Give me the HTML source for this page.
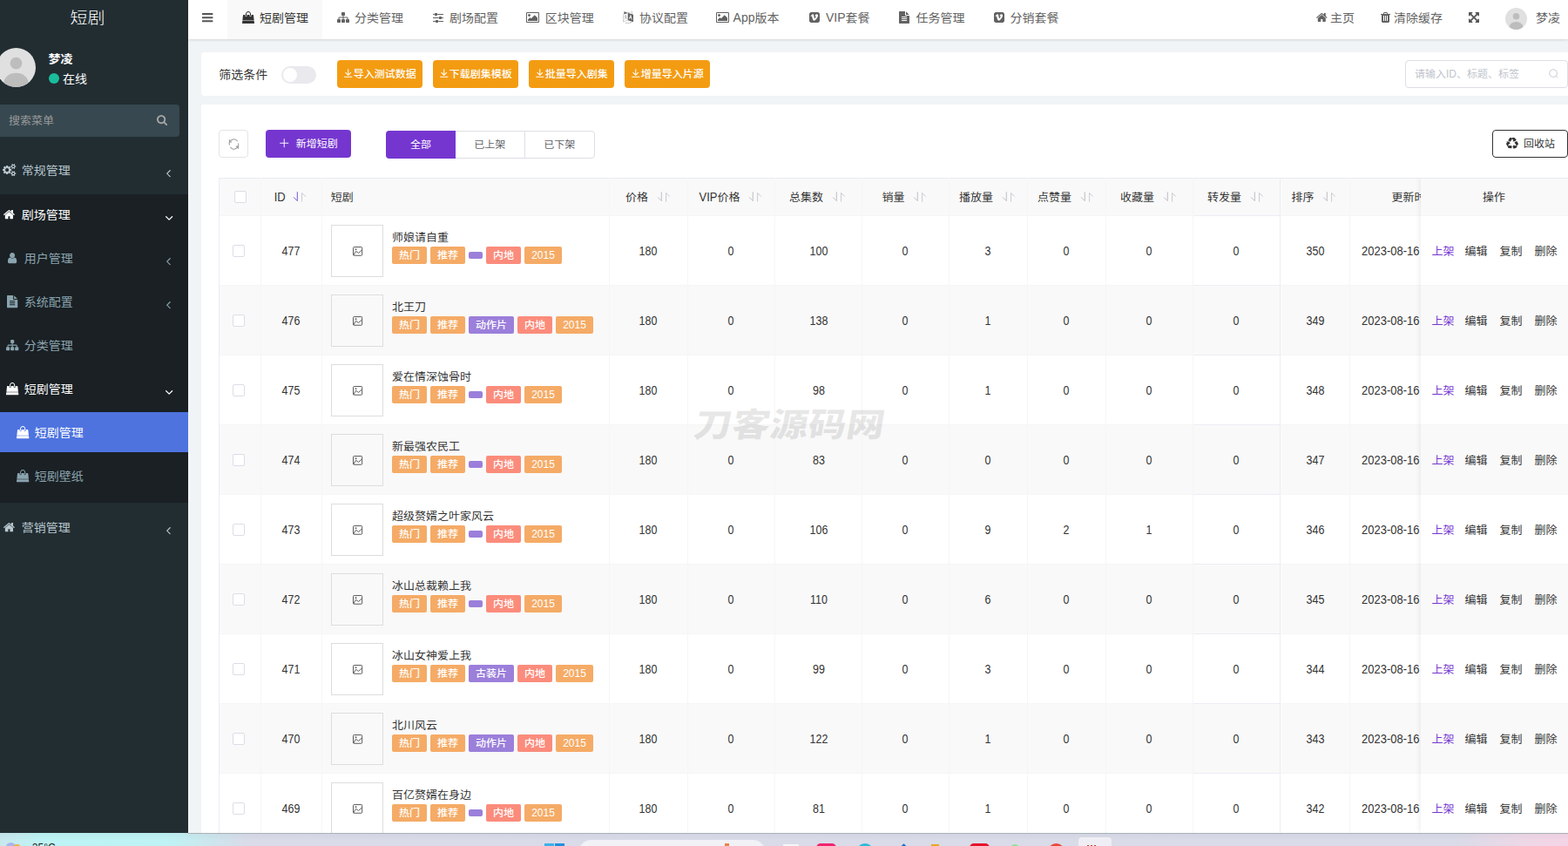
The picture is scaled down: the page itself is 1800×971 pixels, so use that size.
<!DOCTYPE html>
<html lang="zh-CN">
<head>
<meta charset="utf-8">
<title>短剧</title>
<style>
*{box-sizing:border-box;margin:0;padding:0}
html,body{width:1800px;height:971px;overflow:hidden;background:#f1f4f6}
body{position:relative;font-family:"Liberation Sans","Noto Sans CJK SC",sans-serif;font-size:14px;color:#333}
.t{position:absolute;white-space:nowrap;display:block;transform:scaleY(0.925);transform-origin:0 50%}
.l{display:inline-block}
.tag{transform:none}
.tag b{display:block;font-weight:500;transform:scaleY(0.925)}
.ic{position:absolute;display:block;overflow:visible}
.abs{position:absolute}
ul{list-style:none}
a{text-decoration:none;color:inherit}
#sidebar{position:absolute;left:0;top:0;width:216px;height:956px;background:#222d32;overflow:hidden}
#sidebar .dark{position:absolute;left:0;top:223px;width:216px;height:354px;background:#1a2024}
#sidebar .act{position:absolute;left:0;top:473px;width:216px;height:46px;background:#4e73df}
#sidebar .search{position:absolute;left:0;top:120px;width:206px;height:37px;background:#374850;border-radius:0 4px 4px 0}
#topnav{position:absolute;left:216px;top:0;width:1584px;height:45px;background:#fff;box-shadow:0 1px 3px rgba(0,0,0,.13)}
#topnav .cur{position:absolute;left:45px;top:0;width:109px;height:45px;background:#f9f9f9}
.card{position:absolute;background:#fff}
.btn-o{position:absolute;top:69px;height:32px;width:98px;border-radius:4px;background:#f39c12}
.btn-p{position:absolute;border-radius:4px;background:#7536d0}
#tbl{position:absolute;left:251px;top:204px;width:1549px;height:752px;overflow:hidden}
#tbl .hd{position:absolute;left:0;top:0;width:1549px;height:44px;background:#f9f9f9;border-top:1px solid #e8eaf6;border-bottom:1px solid #f6f6f6}
#tbl .row{position:absolute;left:0;width:1549px;height:80px;background:#fff;border-bottom:1px solid #f6f6f6}
#tbl .row.alt{background:#f9f9f9}
#tbl .vl{position:absolute;top:0;width:1px;height:752px;background:#f6f6f7}
#tbl .fix{position:absolute;top:0;width:170px;height:752px;box-shadow:-1px 0 6px rgba(0,0,0,.075)}
.cb{position:absolute;width:14px;height:14px;border:1px solid #dcdde8;border-radius:2px;background:#fff}
.img{position:absolute;left:129px;width:60px;height:60px;border:1px solid #dddddd}
.tag{position:absolute;height:20px;border-radius:2px;color:#fff;font-size:12px;line-height:20px;text-align:center;white-space:nowrap}
.tag.o{background:#f5ab66}.tag.p{background:#9b7fda}.tag.c{background:#fb8c7c}
.tag.e{height:8px;border-radius:2px}
.num{position:absolute;text-align:center;font-size:13px;line-height:20px;color:#333;white-space:nowrap;transform:scale(0.96,1.09)}
#taskbar{position:absolute;left:0;top:956px;width:1800px;height:15px;overflow:hidden;background:linear-gradient(90deg,#c8e8ee 0,#bdf4f5 50px,#bff2f4 195px,#d9dbe8 285px,#dadbe8 1670px,#efd7e6 1755px,#f4d4e6 1800px)}
</style>
</head>
<body>
<aside id="sidebar">
<div class="dark"></div><div class="act"></div>
<a class="t " style="left:80.60px;top:5.50px;font-size:20px;line-height:30px;color:#fff;font-weight:300;">短剧</a><svg class="ic" style="left:-4.3px;top:54.5px;width:45px;height:45px" viewBox="0 0 46 46"><defs><clipPath id="av1"><circle cx="23" cy="23" r="23"/></clipPath></defs><circle cx="23" cy="23" r="23" fill="#e0e0e0"/><g clip-path="url(#av1)" fill="#bdbdbd"><circle cx="23" cy="18" r="7"/><ellipse cx="23" cy="41" rx="14.5" ry="11.5"/></g></svg><p class="t " style="left:55.60px;top:56.50px;font-size:14px;line-height:20px;color:#fff;font-weight:bold;">梦凌</p><span class="abs" style="left:56px;top:84px;width:12px;height:12px;border-radius:50%;background:#1abc9c"></span><a class="t " style="left:72.00px;top:79.60px;font-size:14px;line-height:20px;color:#fff;">在线</a><div class="search"><span class="t " style="left:10.00px;top:8.90px;font-size:13px;line-height:20px;color:#9a9a9a;">搜索菜单</span><svg class="ic" style="left:179.60px;top:12.00px;width:12.07px;height:12.07px;" viewBox="0.0 -1408.0 1664.0 1664.0" aria-hidden="true"><path fill="#a8a8a8" transform="scale(1,-1)" d="M1152 704q0 185 -131.5 316.5t-316.5 131.5t-316.5 -131.5t-131.5 -316.5t131.5 -316.5t316.5 -131.5t316.5 131.5t131.5 316.5zM1664 -128q0 -52 -38 -90t-90 -38q-54 0 -90 38l-343 342q-179 -124 -399 -124q-143 0 -273.5 55.5t-225 150t-150 225t-55.5 273.5
t55.5 273.5t150 225t225 150t273.5 55.5t273.5 -55.5t225 -150t150 -225t55.5 -273.5q0 -220 -124 -399l343 -343q37 -37 37 -90z"/></svg></div>
<ul>
<li><svg class="ic" style="left:3.14px;top:187.97px;width:15.32px;height:14.05px;" viewBox="0.0 -1520.0 1920.0 1761.0" aria-hidden="true"><path fill="#b8c7ce" transform="scale(1,-1)" d="M896 640q0 106 -75 181t-181 75t-181 -75t-75 -181t75 -181t181 -75t181 75t75 181zM1664 128q0 52 -38 90t-90 38t-90 -38t-38 -90q0 -53 37.5 -90.5t90.5 -37.5t90.5 37.5t37.5 90.5zM1664 1152q0 52 -38 90t-90 38t-90 -38t-38 -90q0 -53 37.5 -90.5t90.5 -37.5
t90.5 37.5t37.5 90.5zM1280 731v-185q0 -10 -7 -19.5t-16 -10.5l-155 -24q-11 -35 -32 -76q34 -48 90 -115q7 -11 7 -20q0 -12 -7 -19q-23 -30 -82.5 -89.5t-78.5 -59.5q-11 0 -21 7l-115 90q-37 -19 -77 -31q-11 -108 -23 -155q-7 -24 -30 -24h-186q-11 0 -20 7.5t-10 17.5
l-23 153q-34 10 -75 31l-118 -89q-7 -7 -20 -7q-11 0 -21 8q-144 133 -144 160q0 9 7 19q10 14 41 53t47 61q-23 44 -35 82l-152 24q-10 1 -17 9.5t-7 19.5v185q0 10 7 19.5t16 10.5l155 24q11 35 32 76q-34 48 -90 115q-7 11 -7 20q0 12 7 20q22 30 82 89t79 59q11 0 21 -7
l115 -90q34 18 77 32q11 108 23 154q7 24 30 24h186q11 0 20 -7.5t10 -17.5l23 -153q34 -10 75 -31l118 89q8 7 20 7q11 0 21 -8q144 -133 144 -160q0 -8 -7 -19q-12 -16 -42 -54t-45 -60q23 -48 34 -82l152 -23q10 -2 17 -10.5t7 -19.5zM1920 198v-140q0 -16 -149 -31
q-12 -27 -30 -52q51 -113 51 -138q0 -4 -4 -7q-122 -71 -124 -71q-8 0 -46 47t-52 68q-20 -2 -30 -2t-30 2q-14 -21 -52 -68t-46 -47q-2 0 -124 71q-4 3 -4 7q0 25 51 138q-18 25 -30 52q-149 15 -149 31v140q0 16 149 31q13 29 30 52q-51 113 -51 138q0 4 4 7q4 2 35 20
t59 34t30 16q8 0 46 -46.5t52 -67.5q20 2 30 2t30 -2q51 71 92 112l6 2q4 0 124 -70q4 -3 4 -7q0 -25 -51 -138q17 -23 30 -52q149 -15 149 -31zM1920 1222v-140q0 -16 -149 -31q-12 -27 -30 -52q51 -113 51 -138q0 -4 -4 -7q-122 -71 -124 -71q-8 0 -46 47t-52 68
q-20 -2 -30 -2t-30 2q-14 -21 -52 -68t-46 -47q-2 0 -124 71q-4 3 -4 7q0 25 51 138q-18 25 -30 52q-149 15 -149 31v140q0 16 149 31q13 29 30 52q-51 113 -51 138q0 4 4 7q4 2 35 20t59 34t30 16q8 0 46 -46.5t52 -67.5q20 2 30 2t30 -2q51 71 92 112l6 2q4 0 124 -70
q4 -3 4 -7q0 -25 -51 -138q17 -23 30 -52q149 -15 149 -31z"/></svg><a class="t " style="left:24.80px;top:184.50px;font-size:14px;line-height:20px;color:#b8c7ce;">常规管理</a><svg class="ic" style="left:191.36px;top:194.82px;width:4.87px;height:8.35px;" viewBox="45.0 -1075.0 582.0 998.0" aria-hidden="true"><path fill="#b8c7ce" transform="scale(1,-1)" d="M627 992q0 -13 -10 -23l-393 -393l393 -393q10 -10 10 -23t-10 -23l-50 -50q-10 -10 -23 -10t-23 10l-466 466q-10 10 -10 23t10 23l466 466q10 10 23 10t23 -10l50 -50q10 -10 10 -23z"/></svg></li>
<li><svg class="ic" style="left:4.37px;top:240.88px;width:12.87px;height:10.24px;" viewBox="25.9 -1283.0 1612.2 1283.0" aria-hidden="true"><path fill="#fff" transform="scale(1,-1)" d="M1408 544v-480q0 -26 -19 -45t-45 -19h-384v384h-256v-384h-384q-26 0 -45 19t-19 45v480q0 1 0.5 3t0.5 3l575 474l575 -474q1 -2 1 -6zM1631 613l-62 -74q-8 -9 -21 -11h-3q-13 0 -21 7l-692 577l-692 -577q-12 -8 -24 -7q-13 2 -21 11l-62 74q-8 10 -7 23.5t11 21.5
l719 599q32 26 76 26t76 -26l244 -204v195q0 14 9 23t23 9h192q14 0 23 -9t9 -23v-408l219 -182q10 -8 11 -21.5t-7 -23.5z"/></svg><a class="t " style="left:24.80px;top:235.50px;font-size:14px;line-height:20px;color:#fff;">剧场管理</a><svg class="ic" style="left:190.32px;top:247.56px;width:8.35px;height:4.87px;" viewBox="77.0 -883.0 998.0 582.0" aria-hidden="true"><path fill="#fff" transform="scale(1,-1)" d="M1075 800q0 -13 -10 -23l-466 -466q-10 -10 -23 -10t-23 10l-466 466q-10 10 -10 23t10 23l50 50q10 10 23 10t23 -10l393 -393l393 393q10 10 23 10t23 -10l50 -50q10 -10 10 -23z"/></svg></li>
<li><svg class="ic" style="left:8.79px;top:289.87px;width:10.21px;height:12.26px;" viewBox="0.0 -1408.0 1280.0 1536.0" aria-hidden="true"><path fill="#8aa4af" transform="scale(1,-1)" d="M1280 137q0 -109 -62.5 -187t-150.5 -78h-854q-88 0 -150.5 78t-62.5 187q0 85 8.5 160.5t31.5 152t58.5 131t94 89t134.5 34.5q131 -128 313 -128t313 128q76 0 134.5 -34.5t94 -89t58.5 -131t31.5 -152t8.5 -160.5zM1024 1024q0 -159 -112.5 -271.5t-271.5 -112.5
t-271.5 112.5t-112.5 271.5t112.5 271.5t271.5 112.5t271.5 -112.5t112.5 -271.5z"/></svg><a class="t " style="left:27.70px;top:285.50px;font-size:14px;line-height:20px;color:#8aa4af;">用户管理</a><svg class="ic" style="left:191.36px;top:295.82px;width:4.87px;height:8.35px;" viewBox="45.0 -1075.0 582.0 998.0" aria-hidden="true"><path fill="#8aa4af" transform="scale(1,-1)" d="M627 992q0 -13 -10 -23l-393 -393l393 -393q10 -10 10 -23t-10 -23l-50 -50q-10 -10 -23 -10t-23 10l-466 466q-10 10 -10 23t10 23l466 466q10 10 23 10t23 -10l50 -50q10 -10 10 -23z"/></svg></li>
<li><svg class="ic" style="left:7.77px;top:338.85px;width:12.26px;height:14.30px;" viewBox="0.0 -1536.0 1536.0 1792.0" aria-hidden="true"><path fill="#8aa4af" transform="scale(1,-1)" d="M1468 1060q14 -14 28 -36h-472v472q22 -14 36 -28zM992 896h544v-1056q0 -40 -28 -68t-68 -28h-1344q-40 0 -68 28t-28 68v1600q0 40 28 68t68 28h800v-544q0 -40 28 -68t68 -28zM1152 160v64q0 14 -9 23t-23 9h-704q-14 0 -23 -9t-9 -23v-64q0 -14 9 -23t23 -9h704
q14 0 23 9t9 23zM1152 416v64q0 14 -9 23t-23 9h-704q-14 0 -23 -9t-9 -23v-64q0 -14 9 -23t23 -9h704q14 0 23 9t9 23zM1152 672v64q0 14 -9 23t-23 9h-704q-14 0 -23 -9t-9 -23v-64q0 -14 9 -23t23 -9h704q14 0 23 9t9 23z"/></svg><a class="t " style="left:27.70px;top:335.50px;font-size:14px;line-height:20px;color:#8aa4af;">系统配置</a><svg class="ic" style="left:191.36px;top:345.82px;width:4.87px;height:8.35px;" viewBox="45.0 -1075.0 582.0 998.0" aria-hidden="true"><path fill="#8aa4af" transform="scale(1,-1)" d="M627 992q0 -13 -10 -23l-393 -393l393 -393q10 -10 10 -23t-10 -23l-50 -50q-10 -10 -23 -10t-23 10l-466 466q-10 10 -10 23t10 23l466 466q10 10 23 10t23 -10l50 -50q10 -10 10 -23z"/></svg></li>
<li><svg class="ic" style="left:6.75px;top:389.87px;width:14.30px;height:12.26px;" viewBox="0.0 -1408.0 1792.0 1536.0" aria-hidden="true"><path fill="#8aa4af" transform="scale(1,-1)" d="M1792 288v-320q0 -40 -28 -68t-68 -28h-320q-40 0 -68 28t-28 68v320q0 40 28 68t68 28h96v192h-512v-192h96q40 0 68 -28t28 -68v-320q0 -40 -28 -68t-68 -28h-320q-40 0 -68 28t-28 68v320q0 40 28 68t68 28h96v192h-512v-192h96q40 0 68 -28t28 -68v-320
q0 -40 -28 -68t-68 -28h-320q-40 0 -68 28t-28 68v320q0 40 28 68t68 28h96v192q0 52 38 90t90 38h512v192h-96q-40 0 -68 28t-28 68v320q0 40 28 68t68 28h320q40 0 68 -28t28 -68v-320q0 -40 -28 -68t-68 -28h-96v-192h512q52 0 90 -38t38 -90v-192h96q40 0 68 -28t28 -68
z"/></svg><a class="t " style="left:27.70px;top:385.50px;font-size:14px;line-height:20px;color:#8aa4af;">分类管理</a></li>
<li><svg class="ic" style="left:6.75px;top:438.85px;width:14.31px;height:14.30px;" viewBox="-0.4 -1536.0 1792.8 1792.0" aria-hidden="true"><path fill="#fff" transform="scale(1,-1)" d="M1757 128l35 -313q3 -28 -16 -50q-19 -21 -48 -21h-1664q-29 0 -48 21q-19 22 -16 50l35 313h1722zM1664 967l86 -775h-1708l86 775q3 24 21 40.5t43 16.5h256v-128q0 -53 37.5 -90.5t90.5 -37.5t90.5 37.5t37.5 90.5v128h384v-128q0 -53 37.5 -90.5t90.5 -37.5
t90.5 37.5t37.5 90.5v128h256q25 0 43 -16.5t21 -40.5zM1280 1152v-256q0 -26 -19 -45t-45 -19t-45 19t-19 45v256q0 106 -75 181t-181 75t-181 -75t-75 -181v-256q0 -26 -19 -45t-45 -19t-45 19t-19 45v256q0 159 112.5 271.5t271.5 112.5t271.5 -112.5t112.5 -271.5z"/></svg><a class="t " style="left:27.70px;top:435.50px;font-size:14px;line-height:20px;color:#fff;">短剧管理</a><svg class="ic" style="left:190.32px;top:447.56px;width:8.35px;height:4.87px;" viewBox="77.0 -883.0 998.0 582.0" aria-hidden="true"><path fill="#fff" transform="scale(1,-1)" d="M1075 800q0 -13 -10 -23l-466 -466q-10 -10 -23 -10t-23 10l-466 466q-10 10 -10 23t10 23l50 50q10 10 23 10t23 -10l393 -393l393 393q10 10 23 10t23 -10l50 -50q10 -10 10 -23z"/></svg></li>
<li><svg class="ic" style="left:18.85px;top:488.85px;width:14.31px;height:14.30px;" viewBox="-0.4 -1536.0 1792.8 1792.0" aria-hidden="true"><path fill="#fff" transform="scale(1,-1)" d="M1757 128l35 -313q3 -28 -16 -50q-19 -21 -48 -21h-1664q-29 0 -48 21q-19 22 -16 50l35 313h1722zM1664 967l86 -775h-1708l86 775q3 24 21 40.5t43 16.5h256v-128q0 -53 37.5 -90.5t90.5 -37.5t90.5 37.5t37.5 90.5v128h384v-128q0 -53 37.5 -90.5t90.5 -37.5
t90.5 37.5t37.5 90.5v128h256q25 0 43 -16.5t21 -40.5zM1280 1152v-256q0 -26 -19 -45t-45 -19t-45 19t-19 45v256q0 106 -75 181t-181 75t-181 -75t-75 -181v-256q0 -26 -19 -45t-45 -19t-45 19t-19 45v256q0 159 112.5 271.5t271.5 112.5t271.5 -112.5t112.5 -271.5z"/></svg><a class="t " style="left:39.70px;top:485.50px;font-size:14px;line-height:20px;color:#fff;">短剧管理</a></li>
<li><svg class="ic" style="left:18.85px;top:538.85px;width:14.31px;height:14.30px;" viewBox="-0.4 -1536.0 1792.8 1792.0" aria-hidden="true"><path fill="#8aa4af" transform="scale(1,-1)" d="M1757 128l35 -313q3 -28 -16 -50q-19 -21 -48 -21h-1664q-29 0 -48 21q-19 22 -16 50l35 313h1722zM1664 967l86 -775h-1708l86 775q3 24 21 40.5t43 16.5h256v-128q0 -53 37.5 -90.5t90.5 -37.5t90.5 37.5t37.5 90.5v128h384v-128q0 -53 37.5 -90.5t90.5 -37.5
t90.5 37.5t37.5 90.5v128h256q25 0 43 -16.5t21 -40.5zM1280 1152v-256q0 -26 -19 -45t-45 -19t-45 19t-19 45v256q0 106 -75 181t-181 75t-181 -75t-75 -181v-256q0 -26 -19 -45t-45 -19t-45 19t-19 45v256q0 159 112.5 271.5t271.5 112.5t271.5 -112.5t112.5 -271.5z"/></svg><a class="t " style="left:39.70px;top:535.50px;font-size:14px;line-height:20px;color:#8aa4af;">短剧壁纸</a></li>
<li><svg class="ic" style="left:4.37px;top:599.88px;width:12.87px;height:10.24px;" viewBox="25.9 -1283.0 1612.2 1283.0" aria-hidden="true"><path fill="#b8c7ce" transform="scale(1,-1)" d="M1408 544v-480q0 -26 -19 -45t-45 -19h-384v384h-256v-384h-384q-26 0 -45 19t-19 45v480q0 1 0.5 3t0.5 3l575 474l575 -474q1 -2 1 -6zM1631 613l-62 -74q-8 -9 -21 -11h-3q-13 0 -21 7l-692 577l-692 -577q-12 -8 -24 -7q-13 2 -21 11l-62 74q-8 10 -7 23.5t11 21.5
l719 599q32 26 76 26t76 -26l244 -204v195q0 14 9 23t23 9h192q14 0 23 -9t9 -23v-408l219 -182q10 -8 11 -21.5t-7 -23.5z"/></svg><a class="t " style="left:24.80px;top:594.50px;font-size:14px;line-height:20px;color:#b8c7ce;">营销管理</a><svg class="ic" style="left:191.36px;top:604.82px;width:4.87px;height:8.35px;" viewBox="45.0 -1075.0 582.0 998.0" aria-hidden="true"><path fill="#b8c7ce" transform="scale(1,-1)" d="M627 992q0 -13 -10 -23l-393 -393l393 -393q10 -10 10 -23t-10 -23l-50 -50q-10 -10 -23 -10t-23 10l-466 466q-10 10 -10 23t10 23l466 466q10 10 23 10t23 -10l50 -50q10 -10 10 -23z"/></svg></li>
</ul>
</aside>
<header id="topnav">
<div class="cur"></div>
<svg class="ic" style="left:16.20px;top:15.00px;width:12.43px;height:10.36px;" viewBox="0.0 -1280.0 1536.0 1280.0" aria-hidden="true"><path fill="#555" transform="scale(1,-1)" d="M1536 192v-128q0 -26 -19 -45t-45 -19h-1408q-26 0 -45 19t-19 45v128q0 26 19 45t45 19h1408q26 0 45 -19t19 -45zM1536 704v-128q0 -26 -19 -45t-45 -19h-1408q-26 0 -45 19t-19 45v128q0 26 19 45t45 19h1408q26 0 45 -19t19 -45zM1536 1216v-128q0 -26 -19 -45
t-45 -19h-1408q-26 0 -45 19t-19 45v128q0 26 19 45t45 19h1408q26 0 45 -19t19 -45z"/></svg><nav><a><svg class="ic" style="left:62.00px;top:13.00px;width:14.01px;height:14.00px;" viewBox="-0.4 -1536.0 1792.8 1792.0" aria-hidden="true"><path fill="#333" transform="scale(1,-1)" d="M1757 128l35 -313q3 -28 -16 -50q-19 -21 -48 -21h-1664q-29 0 -48 21q-19 22 -16 50l35 313h1722zM1664 967l86 -775h-1708l86 775q3 24 21 40.5t43 16.5h256v-128q0 -53 37.5 -90.5t90.5 -37.5t90.5 37.5t37.5 90.5v128h384v-128q0 -53 37.5 -90.5t90.5 -37.5
t90.5 37.5t37.5 90.5v128h256q25 0 43 -16.5t21 -40.5zM1280 1152v-256q0 -26 -19 -45t-45 -19t-45 19t-19 45v256q0 106 -75 181t-181 75t-181 -75t-75 -181v-256q0 -26 -19 -45t-45 -19t-45 19t-19 45v256q0 159 112.5 271.5t271.5 112.5t271.5 -112.5t112.5 -271.5z"/></svg><span class="t " style="left:82.00px;top:9.60px;font-size:14px;line-height:20px;color:#333;">短剧管理</span></a><a><svg class="ic" style="left:171.00px;top:14.00px;width:14.00px;height:12.00px;" viewBox="0.0 -1408.0 1792.0 1536.0" aria-hidden="true"><path fill="#626262" transform="scale(1,-1)" d="M1792 288v-320q0 -40 -28 -68t-68 -28h-320q-40 0 -68 28t-28 68v320q0 40 28 68t68 28h96v192h-512v-192h96q40 0 68 -28t28 -68v-320q0 -40 -28 -68t-68 -28h-320q-40 0 -68 28t-28 68v320q0 40 28 68t68 28h96v192h-512v-192h96q40 0 68 -28t28 -68v-320
q0 -40 -28 -68t-68 -28h-320q-40 0 -68 28t-28 68v320q0 40 28 68t68 28h96v192q0 52 38 90t90 38h512v192h-96q-40 0 -68 28t-28 68v320q0 40 28 68t68 28h320q40 0 68 -28t28 -68v-320q0 -40 -28 -68t-68 -28h-96v-192h512q52 0 90 -38t38 -90v-192h96q40 0 68 -28t28 -68
z"/></svg><span class="t " style="left:191.00px;top:9.60px;font-size:14px;line-height:20px;color:#626262;">分类管理</span></a><a><svg class="ic" style="left:280.60px;top:14.50px;width:12.00px;height:11.00px;" viewBox="0.0 -1280.0 1536.0 1408.0" aria-hidden="true"><path fill="#626262" transform="scale(1,-1)" d="M352 128v-128h-352v128h352zM704 256q26 0 45 -19t19 -45v-256q0 -26 -19 -45t-45 -19h-256q-26 0 -45 19t-19 45v256q0 26 19 45t45 19h256zM864 640v-128h-864v128h864zM224 1152v-128h-224v128h224zM1536 128v-128h-736v128h736zM576 1280q26 0 45 -19t19 -45v-256
q0 -26 -19 -45t-45 -19h-256q-26 0 -45 19t-19 45v256q0 26 19 45t45 19h256zM1216 768q26 0 45 -19t19 -45v-256q0 -26 -19 -45t-45 -19h-256q-26 0 -45 19t-19 45v256q0 26 19 45t45 19h256zM1536 640v-128h-224v128h224zM1536 1152v-128h-864v128h864z"/></svg><span class="t " style="left:300.00px;top:9.60px;font-size:14px;line-height:20px;color:#626262;">剧场配置</span></a><a><svg class="ic" style="left:388.00px;top:14.00px;width:15.00px;height:12.00px;" viewBox="0.0 -1408.0 1920.0 1536.0" aria-hidden="true"><path fill="#626262" transform="scale(1,-1)" d="M640 960q0 -80 -56 -136t-136 -56t-136 56t-56 136t56 136t136 56t136 -56t56 -136zM1664 576v-448h-1408v192l320 320l160 -160l512 512zM1760 1280h-1600q-13 0 -22.5 -9.5t-9.5 -22.5v-1216q0 -13 9.5 -22.5t22.5 -9.5h1600q13 0 22.5 9.5t9.5 22.5v1216
q0 13 -9.5 22.5t-22.5 9.5zM1920 1248v-1216q0 -66 -47 -113t-113 -47h-1600q-66 0 -113 47t-47 113v1216q0 66 47 113t113 47h1600q66 0 113 -47t47 -113z"/></svg><span class="t " style="left:409.70px;top:9.60px;font-size:14px;line-height:20px;color:#626262;">区块管理</span></a><a><svg class="ic" style="left:498.50px;top:13.00px;width:12.00px;height:14.00px;" viewBox="0.0 -1536.0 1536.0 1792.0" aria-hidden="true"><path fill="#626262" transform="scale(1,-1)" d="M654 458q-1 -3 -12.5 0.5t-31.5 11.5l-20 9q-44 20 -87 49q-7 5 -41 31.5t-38 28.5q-67 -103 -134 -181q-81 -95 -105 -110q-4 -2 -19.5 -4t-18.5 0q6 4 82 92q21 24 85.5 115t78.5 118q17 30 51 98.5t36 77.5q-8 1 -110 -33q-8 -2 -27.5 -7.5t-34.5 -9.5t-17 -5
q-2 -2 -2 -10.5t-1 -9.5q-5 -10 -31 -15q-23 -7 -47 0q-18 4 -28 21q-4 6 -5 23q6 2 24.5 5t29.5 6q58 16 105 32q100 35 102 35q10 2 43 19.5t44 21.5q9 3 21.5 8t14.5 5.5t6 -0.5q2 -12 -1 -33q0 -2 -12.5 -27t-26.5 -53.5t-17 -33.5q-25 -50 -77 -131l64 -28
q12 -6 74.5 -32t67.5 -28q4 -1 10.5 -25.5t4.5 -30.5zM449 944q3 -15 -4 -28q-12 -23 -50 -38q-30 -12 -60 -12q-26 3 -49 26q-14 15 -18 41l1 3q3 -3 19.5 -5t26.5 0t58 16q36 12 55 14q17 0 21 -17zM1147 815l63 -227l-139 42zM39 15l694 232v1032l-694 -233v-1031z
M1280 332l102 -31l-181 657l-100 31l-216 -536l102 -31l45 110l211 -65zM777 1294l573 -184v380zM1088 -29l158 -13l-54 -160l-40 66q-130 -83 -276 -108q-58 -12 -91 -12h-84q-79 0 -199.5 39t-183.5 85q-8 7 -8 16q0 8 5 13.5t13 5.5q4 0 18 -7.5t30.5 -16.5t20.5 -11
q73 -37 159.5 -61.5t157.5 -24.5q95 0 167 14.5t157 50.5q15 7 30.5 15.5t34 19t28.5 16.5zM1536 1050v-1079l-774 246q-14 -6 -375 -127.5t-368 -121.5q-13 0 -18 13q0 1 -1 3v1078q3 9 4 10q5 6 20 11q107 36 149 50v384l558 -198q2 0 160.5 55t316 108.5t161.5 53.5
q20 0 20 -21v-418z"/></svg><span class="t " style="left:518.00px;top:9.60px;font-size:14px;line-height:20px;color:#626262;">协议配置</span></a><a><svg class="ic" style="left:606.00px;top:14.00px;width:15.00px;height:12.00px;" viewBox="0.0 -1408.0 1920.0 1536.0" aria-hidden="true"><path fill="#626262" transform="scale(1,-1)" d="M640 960q0 -80 -56 -136t-136 -56t-136 56t-56 136t56 136t136 56t136 -56t56 -136zM1664 576v-448h-1408v192l320 320l160 -160l512 512zM1760 1280h-1600q-13 0 -22.5 -9.5t-9.5 -22.5v-1216q0 -13 9.5 -22.5t22.5 -9.5h1600q13 0 22.5 9.5t9.5 22.5v1216
q0 13 -9.5 22.5t-22.5 9.5zM1920 1248v-1216q0 -66 -47 -113t-113 -47h-1600q-66 0 -113 47t-47 113v1216q0 66 47 113t113 47h1600q66 0 113 -47t47 -113z"/></svg><span class="t " style="left:625.60px;top:9.60px;font-size:14px;line-height:20px;color:#626262;"><span class="l" style="transform:scaleY(1.081)">App</span>版本</span></a><a><svg class="ic" style="left:712.50px;top:14.00px;width:12.00px;height:12.00px;" viewBox="0.0 -1408.0 1536.0 1536.0" aria-hidden="true"><path fill="#626262" transform="scale(1,-1)" d="M1292 898q10 216 -161 222q-231 8 -312 -261q44 19 82 19q85 0 74 -96q-4 -57 -74 -167t-105 -110q-43 0 -82 169q-13 54 -45 255q-30 189 -160 177q-59 -7 -164 -100l-81 -72l-81 -72l52 -67q76 52 87 52q57 0 107 -179q15 -55 45 -164.5t45 -164.5q68 -179 164 -179
q157 0 383 294q220 283 226 444zM1536 1120v-960q0 -119 -84.5 -203.5t-203.5 -84.5h-960q-119 0 -203.5 84.5t-84.5 203.5v960q0 119 84.5 203.5t203.5 84.5h960q119 0 203.5 -84.5t84.5 -203.5z"/></svg><span class="t " style="left:732.00px;top:9.60px;font-size:14px;line-height:20px;color:#626262;"><span class="l" style="transform:scaleY(1.081)">VIP</span>套餐</span></a><a><svg class="ic" style="left:816.00px;top:13.00px;width:12.00px;height:14.00px;" viewBox="0.0 -1536.0 1536.0 1792.0" aria-hidden="true"><path fill="#626262" transform="scale(1,-1)" d="M1468 1060q14 -14 28 -36h-472v472q22 -14 36 -28zM992 896h544v-1056q0 -40 -28 -68t-68 -28h-1344q-40 0 -68 28t-28 68v1600q0 40 28 68t68 28h800v-544q0 -40 28 -68t68 -28zM1152 160v64q0 14 -9 23t-23 9h-704q-14 0 -23 -9t-9 -23v-64q0 -14 9 -23t23 -9h704
q14 0 23 9t9 23zM1152 416v64q0 14 -9 23t-23 9h-704q-14 0 -23 -9t-9 -23v-64q0 -14 9 -23t23 -9h704q14 0 23 9t9 23zM1152 672v64q0 14 -9 23t-23 9h-704q-14 0 -23 -9t-9 -23v-64q0 -14 9 -23t23 -9h704q14 0 23 9t9 23z"/></svg><span class="t " style="left:835.60px;top:9.60px;font-size:14px;line-height:20px;color:#626262;">任务管理</span></a><a><svg class="ic" style="left:925.00px;top:14.00px;width:12.00px;height:12.00px;" viewBox="0.0 -1408.0 1536.0 1536.0" aria-hidden="true"><path fill="#626262" transform="scale(1,-1)" d="M1292 898q10 216 -161 222q-231 8 -312 -261q44 19 82 19q85 0 74 -96q-4 -57 -74 -167t-105 -110q-43 0 -82 169q-13 54 -45 255q-30 189 -160 177q-59 -7 -164 -100l-81 -72l-81 -72l52 -67q76 52 87 52q57 0 107 -179q15 -55 45 -164.5t45 -164.5q68 -179 164 -179
q157 0 383 294q220 283 226 444zM1536 1120v-960q0 -119 -84.5 -203.5t-203.5 -84.5h-960q-119 0 -203.5 84.5t-84.5 203.5v960q0 119 84.5 203.5t203.5 84.5h960q119 0 203.5 -84.5t84.5 -203.5z"/></svg><span class="t " style="left:943.50px;top:9.60px;font-size:14px;line-height:20px;color:#626262;">分销套餐</span></a></nav>
<svg class="ic" style="left:1294.60px;top:14.80px;width:12.60px;height:10.02px;" viewBox="25.9 -1283.0 1612.2 1283.0" aria-hidden="true"><path fill="#626262" transform="scale(1,-1)" d="M1408 544v-480q0 -26 -19 -45t-45 -19h-384v384h-256v-384h-384q-26 0 -45 19t-19 45v480q0 1 0.5 3t0.5 3l575 474l575 -474q1 -2 1 -6zM1631 613l-62 -74q-8 -9 -21 -11h-3q-13 0 -21 7l-692 577l-692 -577q-12 -8 -24 -7q-13 2 -21 11l-62 74q-8 10 -7 23.5t11 21.5
l719 599q32 26 76 26t76 -26l244 -204v195q0 14 9 23t23 9h192q14 0 23 -9t9 -23v-408l219 -182q10 -8 11 -21.5t-7 -23.5z"/></svg><span class="t " style="left:1311.00px;top:9.60px;font-size:14px;line-height:20px;color:#626262;">主页</span><svg class="ic" style="left:1369.00px;top:14.00px;width:11.00px;height:12.00px;" viewBox="0.0 -1408.0 1408.0 1536.0" aria-hidden="true"><path fill="#626262" transform="scale(1,-1)" d="M512 160v704q0 14 -9 23t-23 9h-64q-14 0 -23 -9t-9 -23v-704q0 -14 9 -23t23 -9h64q14 0 23 9t9 23zM768 160v704q0 14 -9 23t-23 9h-64q-14 0 -23 -9t-9 -23v-704q0 -14 9 -23t23 -9h64q14 0 23 9t9 23zM1024 160v704q0 14 -9 23t-23 9h-64q-14 0 -23 -9t-9 -23v-704
q0 -14 9 -23t23 -9h64q14 0 23 9t9 23zM480 1152h448l-48 117q-7 9 -17 11h-317q-10 -2 -17 -11zM1408 1120v-64q0 -14 -9 -23t-23 -9h-96v-948q0 -83 -47 -143.5t-113 -60.5h-832q-66 0 -113 58.5t-47 141.5v952h-96q-14 0 -23 9t-9 23v64q0 14 9 23t23 9h309l70 167
q15 37 54 63t79 26h320q40 0 79 -26t54 -63l70 -167h309q14 0 23 -9t9 -23z"/></svg><span class="t " style="left:1384.00px;top:9.60px;font-size:14px;line-height:20px;color:#626262;">清除缓存</span><svg class="ic" style="left:1470.00px;top:14.00px;width:12.00px;height:12.00px;" viewBox="0.0 -1408.0 1536.0 1536.0" aria-hidden="true"><path fill="#555" transform="scale(1,-1)" d="M1283 995l-355 -355l355 -355l144 144q29 31 70 14q39 -17 39 -59v-448q0 -26 -19 -45t-45 -19h-448q-42 0 -59 40q-17 39 14 69l144 144l-355 355l-355 -355l144 -144q31 -30 14 -69q-17 -40 -59 -40h-448q-26 0 -45 19t-19 45v448q0 42 40 59q39 17 69 -14l144 -144
l355 355l-355 355l-144 -144q-19 -19 -45 -19q-12 0 -24 5q-40 17 -40 59v448q0 26 19 45t45 19h448q42 0 59 -40q17 -39 -14 -69l-144 -144l355 -355l355 355l-144 144q-31 30 -14 69q17 40 59 40h448q26 0 45 -19t19 -45v-448q0 -42 -39 -59q-13 -5 -25 -5q-26 0 -45 19z
"/></svg><svg class="ic" style="left:1512.0px;top:9px;width:25px;height:25px" viewBox="0 0 46 46"><defs><clipPath id="av2"><circle cx="23" cy="23" r="23"/></clipPath></defs><circle cx="23" cy="23" r="23" fill="#e0e0e0"/><g clip-path="url(#av2)" fill="#bdbdbd"><circle cx="23" cy="18" r="7"/><ellipse cx="23" cy="41" rx="14.5" ry="11.5"/></g></svg><span class="t " style="left:1547.00px;top:9.60px;font-size:14px;line-height:20px;color:#626262;">梦凌</span>
</header>
<section class="card" style="left:231px;top:60px;width:1569px;height:50px;border-radius:4px 0 0 4px"></section>
<span class="t " style="left:251.20px;top:74.60px;font-size:14px;line-height:20px;color:#333;">筛选条件</span><span class="abs" style="left:323px;top:76px;width:40px;height:20px;border-radius:10px;background:#e9e9ee"><i class="abs" style="left:2px;top:2px;width:16px;height:16px;border-radius:50%;background:#fff"></i></span><a class="btn-o" style="left:387px"><svg class="ic" style="left:8px;top:10.2px;width:9.5px;height:10px" viewBox="0 0 9.5 10"><path d="M4.75 0.3V7.2M1.6 4.2L4.75 7.3L7.9 4.2M0.2 9.2H9.3" fill="none" stroke="#fff" stroke-width="1.05"/></svg><span class="t " style="left:18.70px;top:6.00px;font-size:12px;line-height:20px;color:#fff;font-weight:500;">导入测试数据</span></a><a class="btn-o" style="left:497px"><svg class="ic" style="left:8px;top:10.2px;width:9.5px;height:10px" viewBox="0 0 9.5 10"><path d="M4.75 0.3V7.2M1.6 4.2L4.75 7.3L7.9 4.2M0.2 9.2H9.3" fill="none" stroke="#fff" stroke-width="1.05"/></svg><span class="t " style="left:18.70px;top:6.00px;font-size:12px;line-height:20px;color:#fff;font-weight:500;">下载剧集模板</span></a><a class="btn-o" style="left:607px"><svg class="ic" style="left:8px;top:10.2px;width:9.5px;height:10px" viewBox="0 0 9.5 10"><path d="M4.75 0.3V7.2M1.6 4.2L4.75 7.3L7.9 4.2M0.2 9.2H9.3" fill="none" stroke="#fff" stroke-width="1.05"/></svg><span class="t " style="left:18.70px;top:6.00px;font-size:12px;line-height:20px;color:#fff;font-weight:500;">批量导入剧集</span></a><a class="btn-o" style="left:717px"><svg class="ic" style="left:8px;top:10.2px;width:9.5px;height:10px" viewBox="0 0 9.5 10"><path d="M4.75 0.3V7.2M1.6 4.2L4.75 7.3L7.9 4.2M0.2 9.2H9.3" fill="none" stroke="#fff" stroke-width="1.05"/></svg><span class="t " style="left:18.70px;top:6.00px;font-size:12px;line-height:20px;color:#fff;font-weight:500;">增量导入片源</span></a><div class="abs" style="left:1613px;top:69px;width:187px;height:32px;border:1px solid #dcdfe6;border-radius:4px;background:#fff"><span class="t " style="left:10.00px;top:5.00px;font-size:12px;line-height:20px;color:#c0c4cc;">请输入<span class="l" style="transform:scaleY(1.081)">ID</span>、标题、标签</span><svg class="ic" style="left:163.8px;top:8.8px;width:11.5px;height:11.5px" viewBox="0 0 12 12"><circle cx="5.3" cy="5.3" r="4.5" fill="none" stroke="#c4c7d3" stroke-width="1"/><path d="M8.6 8.6L10.6 10.6" stroke="#c4c7d3" stroke-width="1" fill="none"/></svg></div>
<section class="card" style="left:231px;top:120px;width:1569px;height:836px;border-radius:2px 0 0 0"></section>
<a class="abs" style="left:251px;top:149px;width:34px;height:32px;border:1px solid #e4e4e4;border-radius:4px;background:#fff"><svg class="ic" style="left:9.6px;top:8.8px;width:13px;height:13px" viewBox="0 0 13 13"><g fill="none" stroke="#999" stroke-width="1.05"><path d="M1.5 7.6A5.1 5.1 0 0 1 10.6 3.2"/><path d="M11.5 5.4A5.1 5.1 0 0 1 2.4 9.8"/><path d="M1.4 1.3V3.9H4.2"/><path d="M11.6 11.7V9.1H8.8"/></g></svg></a><a class="btn-p" style="left:305px;top:149px;width:98px;height:32px"><svg class="ic" style="left:16px;top:9.8px;width:10.5px;height:10.5px" viewBox="0 0 11 11"><path d="M5.5 0.3V10.7M0.3 5.5H10.7" stroke="#fff" stroke-width="1" fill="none"/></svg><span class="t " style="left:34.70px;top:5.50px;font-size:12px;line-height:20px;color:#fff;">新增短剧</span></a><div class="abs" style="left:443px;top:150px;width:240px;height:32px;border:1px solid #dcdfe6;border-radius:4px;background:#fff"><a class="abs" style="left:-1px;top:-1px;width:80px;height:32px;background:#7536d0;border-radius:4px 0 0 4px"></a><i class="abs" style="left:158px;top:0;width:1px;height:30px;background:#dcdfe6"></i><span class="t " style="left:27.00px;top:5.00px;font-size:12px;line-height:20px;color:#fff;">全部</span><span class="t " style="left:100.30px;top:5.00px;font-size:12px;line-height:20px;color:#606266;">已上架</span><span class="t " style="left:180.30px;top:5.00px;font-size:12px;line-height:20px;color:#606266;">已下架</span></div>
<a class="abs" style="left:1713px;top:149px;width:87px;height:32px;border:1px solid #333;border-radius:4px;background:#fff"><svg class="ic" style="left:14.90px;top:8.30px;width:13.94px;height:13.52px;" viewBox="16.0 -1535.9 1759.8 1705.9" aria-hidden="true"><path fill="#333" transform="scale(1,-1)" d="M836 367l-15 -368l-2 -22l-420 29q-36 3 -67 31.5t-47 65.5q-11 27 -14.5 55t4 65t12 55t21.5 64t19 53q78 -12 509 -28zM449 953l180 -379l-147 92q-63 -72 -111.5 -144.5t-72.5 -125t-39.5 -94.5t-18.5 -63l-4 -21l-190 357q-17 26 -18 56t6 47l8 18q35 63 114 188
l-140 86zM1680 436l-188 -359q-12 -29 -36.5 -46.5t-43.5 -20.5l-18 -4q-71 -7 -219 -12l8 -164l-230 367l211 362l7 -173q170 -16 283 -5t170 33zM895 1360q-47 -63 -265 -435l-317 187l-19 12l225 356q20 31 60 45t80 10q24 -2 48.5 -12t42 -21t41.5 -33t36 -34.5
t36 -39.5t32 -35zM1550 1053l212 -363q18 -37 12.5 -76t-27.5 -74q-13 -20 -33 -37t-38 -28t-48.5 -22t-47 -16t-51.5 -14t-46 -12q-34 72 -265 436l313 195zM1407 1279l142 83l-220 -373l-419 20l151 86q-34 89 -75 166t-75.5 123.5t-64.5 80t-47 46.5l-17 13l405 -1
q31 3 58 -10.5t39 -28.5l11 -15q39 -61 112 -190z"/></svg><span class="t " style="left:35.00px;top:4.70px;font-size:12px;line-height:20px;color:#333;">回收站</span></a>
<div id="tbl">
<div class="hd"></div>
<div class="row" style="top:44px"></div><div class="row alt" style="top:124px"></div><div class="row" style="top:204px"></div><div class="row alt" style="top:284px"></div><div class="row" style="top:364px"></div><div class="row alt" style="top:444px"></div><div class="row" style="top:524px"></div><div class="row alt" style="top:604px"></div><div class="row" style="top:684px"></div>
<i class="vl" style="left:0;background:#ebecf7"></i><i class="vl" style="left:48px"></i><i class="vl" style="left:118px"></i><i class="vl" style="left:448px"></i><i class="vl" style="left:538px"></i><i class="vl" style="left:638px"></i><i class="vl" style="left:738px"></i><i class="vl" style="left:838px"></i><i class="vl" style="left:928px"></i><i class="vl" style="left:1018px"></i><i class="vl" style="left:1118px"></i><i class="vl" style="left:1298px"></i><i class="vl" style="left:1218px;background:#ecedf7"></i><i class="abs" style="left:1119px;top:43px;width:99px;height:1px;background:#ecedf7"></i><i class="abs" style="left:1119px;top:123px;width:99px;height:1px;background:#ecedf7"></i><i class="abs" style="left:1119px;top:203px;width:99px;height:1px;background:#ecedf7"></i><i class="abs" style="left:1119px;top:283px;width:99px;height:1px;background:#ecedf7"></i><i class="abs" style="left:1119px;top:363px;width:99px;height:1px;background:#ecedf7"></i><i class="abs" style="left:1119px;top:443px;width:99px;height:1px;background:#ecedf7"></i><i class="abs" style="left:1119px;top:523px;width:99px;height:1px;background:#ecedf7"></i><i class="abs" style="left:1119px;top:603px;width:99px;height:1px;background:#ecedf7"></i><i class="abs" style="left:1119px;top:683px;width:99px;height:1px;background:#ecedf7"></i><i class="abs" style="left:1119px;top:763px;width:99px;height:1px;background:#ecedf7"></i>
<span class="cb" style="left:18px;top:15px"></span><span class="t " style="left:63.70px;top:12.60px;font-size:13px;line-height:20px;color:#333;"><span class="l" style="transform:scaleY(1.189)">ID</span></span><svg class="ic" style="left:85.3px;top:16.3px;width:16px;height:12px" viewBox="0 0 16 12"><path d="M5.3 0.2V10.6L1.1 6.4" fill="none" stroke="#7d52e0" stroke-width="1"/><path d="M10.6 11.6V1.4L14.8 5.6" fill="none" stroke="#c9cbd4" stroke-width="1"/></svg><span class="t " style="left:128.70px;top:12.60px;font-size:13px;line-height:20px;color:#333;">短剧</span><span class="t " style="left:467.00px;top:12.60px;font-size:13px;line-height:20px;color:#333;">价格</span><svg class="ic" style="left:502.5px;top:16.3px;width:16px;height:12px" viewBox="0 0 16 12"><path d="M5.3 0.2V10.6L1.1 6.4" fill="none" stroke="#bfbfc6" stroke-width="1"/><path d="M10.6 11.6V1.4L14.8 5.6" fill="none" stroke="#c9cbd4" stroke-width="1"/></svg><span class="t " style="left:551.50px;top:12.60px;font-size:13px;line-height:20px;color:#333;"><span class="l" style="transform:scaleY(1.189)">VIP</span>价格</span><svg class="ic" style="left:607.5px;top:16.3px;width:16px;height:12px" viewBox="0 0 16 12"><path d="M5.3 0.2V10.6L1.1 6.4" fill="none" stroke="#bfbfc6" stroke-width="1"/><path d="M10.6 11.6V1.4L14.8 5.6" fill="none" stroke="#c9cbd4" stroke-width="1"/></svg><span class="t " style="left:655.00px;top:12.60px;font-size:13px;line-height:20px;color:#333;">总集数</span><svg class="ic" style="left:703.5px;top:16.3px;width:16px;height:12px" viewBox="0 0 16 12"><path d="M5.3 0.2V10.6L1.1 6.4" fill="none" stroke="#bfbfc6" stroke-width="1"/><path d="M10.6 11.6V1.4L14.8 5.6" fill="none" stroke="#c9cbd4" stroke-width="1"/></svg><span class="t " style="left:761.50px;top:12.60px;font-size:13px;line-height:20px;color:#333;">销量</span><svg class="ic" style="left:797.0px;top:16.3px;width:16px;height:12px" viewBox="0 0 16 12"><path d="M5.3 0.2V10.6L1.1 6.4" fill="none" stroke="#bfbfc6" stroke-width="1"/><path d="M10.6 11.6V1.4L14.8 5.6" fill="none" stroke="#c9cbd4" stroke-width="1"/></svg><span class="t " style="left:850.00px;top:12.60px;font-size:13px;line-height:20px;color:#333;">播放量</span><svg class="ic" style="left:898.5px;top:16.3px;width:16px;height:12px" viewBox="0 0 16 12"><path d="M5.3 0.2V10.6L1.1 6.4" fill="none" stroke="#bfbfc6" stroke-width="1"/><path d="M10.6 11.6V1.4L14.8 5.6" fill="none" stroke="#c9cbd4" stroke-width="1"/></svg><span class="t " style="left:940.00px;top:12.60px;font-size:13px;line-height:20px;color:#333;">点赞量</span><svg class="ic" style="left:988.5px;top:16.3px;width:16px;height:12px" viewBox="0 0 16 12"><path d="M5.3 0.2V10.6L1.1 6.4" fill="none" stroke="#bfbfc6" stroke-width="1"/><path d="M10.6 11.6V1.4L14.8 5.6" fill="none" stroke="#c9cbd4" stroke-width="1"/></svg><span class="t " style="left:1035.00px;top:12.60px;font-size:13px;line-height:20px;color:#333;">收藏量</span><svg class="ic" style="left:1083.5px;top:16.3px;width:16px;height:12px" viewBox="0 0 16 12"><path d="M5.3 0.2V10.6L1.1 6.4" fill="none" stroke="#bfbfc6" stroke-width="1"/><path d="M10.6 11.6V1.4L14.8 5.6" fill="none" stroke="#c9cbd4" stroke-width="1"/></svg><span class="t " style="left:1135.00px;top:12.60px;font-size:13px;line-height:20px;color:#333;">转发量</span><svg class="ic" style="left:1183.5px;top:16.3px;width:16px;height:12px" viewBox="0 0 16 12"><path d="M5.3 0.2V10.6L1.1 6.4" fill="none" stroke="#bfbfc6" stroke-width="1"/><path d="M10.6 11.6V1.4L14.8 5.6" fill="none" stroke="#c9cbd4" stroke-width="1"/></svg><span class="t " style="left:1231.50px;top:12.60px;font-size:13px;line-height:20px;color:#333;">排序</span><svg class="ic" style="left:1267.0px;top:16.3px;width:16px;height:12px" viewBox="0 0 16 12"><path d="M5.3 0.2V10.6L1.1 6.4" fill="none" stroke="#bfbfc6" stroke-width="1"/><path d="M10.6 11.6V1.4L14.8 5.6" fill="none" stroke="#c9cbd4" stroke-width="1"/></svg><span class="t " style="left:1346.50px;top:12.60px;font-size:13px;line-height:20px;color:#333;">更新时间</span>
<div><span class="cb" style="left:16px;top:77px"></span><span class="num" style="left:48.4px;width:70px;top:75.1px">477</span><span class="img" style="top:54px"><svg class="ic" style="left:23.7px;top:24.1px;width:11.2px;height:10.8px" viewBox="0 0 13 12" preserveAspectRatio="none"><g fill="none" stroke="#555" stroke-width="1.1"><rect x="0.6" y="0.6" width="11.8" height="10.8" rx="1"/><path d="M0.8 11.2L4.2 5.9L7.6 8.3L12.2 4.4"/></g><circle cx="4.2" cy="3.5" r="1" fill="#555"/></svg></span><span class="t " style="left:199.00px;top:58.80px;font-size:13px;line-height:20px;color:#333;">师娘请自重</span><span class="tag o" style="left:199.0px;top:79px;width:40.0px"><b>热门</b></span><span class="tag o" style="left:243.0px;top:79px;width:40.0px"><b>推荐</b></span><span class="tag p e" style="left:286.5px;top:85px;width:16px"></span><span class="tag c" style="left:307.0px;top:79px;width:40.0px"><b>内地</b></span><span class="tag o" style="left:351.0px;top:79px;width:43.0px"><b><span class="l" style="transform:scaleY(1.168)">2015</span></b></span><span class="num" style="left:463.4px;width:60px;top:75.1px">180</span><span class="num" style="left:558.3px;width:60px;top:75.1px">0</span><span class="num" style="left:659.1px;width:60px;top:75.1px">100</span><span class="num" style="left:758.3px;width:60px;top:75.1px">0</span><span class="num" style="left:853.3px;width:60px;top:75.1px">3</span><span class="num" style="left:943.3px;width:60px;top:75.1px">0</span><span class="num" style="left:1038.3px;width:60px;top:75.1px">0</span><span class="num" style="left:1138.3px;width:60px;top:75.1px">0</span><span class="num" style="left:1229.1px;width:60px;top:75.1px">350</span><span class="num" style="left:1312.0px;top:75.1px;text-align:left;transform-origin:0 50%;transform:scale(1,1.09)">2023-08-16</span></div>
<div><span class="cb" style="left:16px;top:157px"></span><span class="num" style="left:48.4px;width:70px;top:155.1px">476</span><span class="img" style="top:134px"><svg class="ic" style="left:23.7px;top:24.1px;width:11.2px;height:10.8px" viewBox="0 0 13 12" preserveAspectRatio="none"><g fill="none" stroke="#555" stroke-width="1.1"><rect x="0.6" y="0.6" width="11.8" height="10.8" rx="1"/><path d="M0.8 11.2L4.2 5.9L7.6 8.3L12.2 4.4"/></g><circle cx="4.2" cy="3.5" r="1" fill="#555"/></svg></span><span class="t " style="left:199.00px;top:138.80px;font-size:13px;line-height:20px;color:#333;">北王刀</span><span class="tag o" style="left:199.0px;top:159px;width:40.0px"><b>热门</b></span><span class="tag o" style="left:243.0px;top:159px;width:40.0px"><b>推荐</b></span><span class="tag p" style="left:287.0px;top:159px;width:52.0px"><b>动作片</b></span><span class="tag c" style="left:343.0px;top:159px;width:40.0px"><b>内地</b></span><span class="tag o" style="left:387.0px;top:159px;width:43.0px"><b><span class="l" style="transform:scaleY(1.168)">2015</span></b></span><span class="num" style="left:463.4px;width:60px;top:155.1px">180</span><span class="num" style="left:558.3px;width:60px;top:155.1px">0</span><span class="num" style="left:659.1px;width:60px;top:155.1px">138</span><span class="num" style="left:758.3px;width:60px;top:155.1px">0</span><span class="num" style="left:853.3px;width:60px;top:155.1px">1</span><span class="num" style="left:943.3px;width:60px;top:155.1px">0</span><span class="num" style="left:1038.3px;width:60px;top:155.1px">0</span><span class="num" style="left:1138.3px;width:60px;top:155.1px">0</span><span class="num" style="left:1229.1px;width:60px;top:155.1px">349</span><span class="num" style="left:1312.0px;top:155.1px;text-align:left;transform-origin:0 50%;transform:scale(1,1.09)">2023-08-16</span></div>
<div><span class="cb" style="left:16px;top:237px"></span><span class="num" style="left:48.4px;width:70px;top:235.1px">475</span><span class="img" style="top:214px"><svg class="ic" style="left:23.7px;top:24.1px;width:11.2px;height:10.8px" viewBox="0 0 13 12" preserveAspectRatio="none"><g fill="none" stroke="#555" stroke-width="1.1"><rect x="0.6" y="0.6" width="11.8" height="10.8" rx="1"/><path d="M0.8 11.2L4.2 5.9L7.6 8.3L12.2 4.4"/></g><circle cx="4.2" cy="3.5" r="1" fill="#555"/></svg></span><span class="t " style="left:199.00px;top:218.80px;font-size:13px;line-height:20px;color:#333;">爱在情深蚀骨时</span><span class="tag o" style="left:199.0px;top:239px;width:40.0px"><b>热门</b></span><span class="tag o" style="left:243.0px;top:239px;width:40.0px"><b>推荐</b></span><span class="tag p e" style="left:286.5px;top:245px;width:16px"></span><span class="tag c" style="left:307.0px;top:239px;width:40.0px"><b>内地</b></span><span class="tag o" style="left:351.0px;top:239px;width:43.0px"><b><span class="l" style="transform:scaleY(1.168)">2015</span></b></span><span class="num" style="left:463.4px;width:60px;top:235.1px">180</span><span class="num" style="left:558.3px;width:60px;top:235.1px">0</span><span class="num" style="left:659.1px;width:60px;top:235.1px">98</span><span class="num" style="left:758.3px;width:60px;top:235.1px">0</span><span class="num" style="left:853.3px;width:60px;top:235.1px">1</span><span class="num" style="left:943.3px;width:60px;top:235.1px">0</span><span class="num" style="left:1038.3px;width:60px;top:235.1px">0</span><span class="num" style="left:1138.3px;width:60px;top:235.1px">0</span><span class="num" style="left:1229.1px;width:60px;top:235.1px">348</span><span class="num" style="left:1312.0px;top:235.1px;text-align:left;transform-origin:0 50%;transform:scale(1,1.09)">2023-08-16</span></div>
<div><span class="cb" style="left:16px;top:317px"></span><span class="num" style="left:48.4px;width:70px;top:315.1px">474</span><span class="img" style="top:294px"><svg class="ic" style="left:23.7px;top:24.1px;width:11.2px;height:10.8px" viewBox="0 0 13 12" preserveAspectRatio="none"><g fill="none" stroke="#555" stroke-width="1.1"><rect x="0.6" y="0.6" width="11.8" height="10.8" rx="1"/><path d="M0.8 11.2L4.2 5.9L7.6 8.3L12.2 4.4"/></g><circle cx="4.2" cy="3.5" r="1" fill="#555"/></svg></span><span class="t " style="left:199.00px;top:298.80px;font-size:13px;line-height:20px;color:#333;">新最强农民工</span><span class="tag o" style="left:199.0px;top:319px;width:40.0px"><b>热门</b></span><span class="tag o" style="left:243.0px;top:319px;width:40.0px"><b>推荐</b></span><span class="tag p e" style="left:286.5px;top:325px;width:16px"></span><span class="tag c" style="left:307.0px;top:319px;width:40.0px"><b>内地</b></span><span class="tag o" style="left:351.0px;top:319px;width:43.0px"><b><span class="l" style="transform:scaleY(1.168)">2015</span></b></span><span class="num" style="left:463.4px;width:60px;top:315.1px">180</span><span class="num" style="left:558.3px;width:60px;top:315.1px">0</span><span class="num" style="left:659.1px;width:60px;top:315.1px">83</span><span class="num" style="left:758.3px;width:60px;top:315.1px">0</span><span class="num" style="left:853.3px;width:60px;top:315.1px">0</span><span class="num" style="left:943.3px;width:60px;top:315.1px">0</span><span class="num" style="left:1038.3px;width:60px;top:315.1px">0</span><span class="num" style="left:1138.3px;width:60px;top:315.1px">0</span><span class="num" style="left:1229.1px;width:60px;top:315.1px">347</span><span class="num" style="left:1312.0px;top:315.1px;text-align:left;transform-origin:0 50%;transform:scale(1,1.09)">2023-08-16</span></div>
<div><span class="cb" style="left:16px;top:397px"></span><span class="num" style="left:48.4px;width:70px;top:395.1px">473</span><span class="img" style="top:374px"><svg class="ic" style="left:23.7px;top:24.1px;width:11.2px;height:10.8px" viewBox="0 0 13 12" preserveAspectRatio="none"><g fill="none" stroke="#555" stroke-width="1.1"><rect x="0.6" y="0.6" width="11.8" height="10.8" rx="1"/><path d="M0.8 11.2L4.2 5.9L7.6 8.3L12.2 4.4"/></g><circle cx="4.2" cy="3.5" r="1" fill="#555"/></svg></span><span class="t " style="left:199.00px;top:378.80px;font-size:13px;line-height:20px;color:#333;">超级赘婿之叶家风云</span><span class="tag o" style="left:199.0px;top:399px;width:40.0px"><b>热门</b></span><span class="tag o" style="left:243.0px;top:399px;width:40.0px"><b>推荐</b></span><span class="tag p e" style="left:286.5px;top:405px;width:16px"></span><span class="tag c" style="left:307.0px;top:399px;width:40.0px"><b>内地</b></span><span class="tag o" style="left:351.0px;top:399px;width:43.0px"><b><span class="l" style="transform:scaleY(1.168)">2015</span></b></span><span class="num" style="left:463.4px;width:60px;top:395.1px">180</span><span class="num" style="left:558.3px;width:60px;top:395.1px">0</span><span class="num" style="left:659.1px;width:60px;top:395.1px">106</span><span class="num" style="left:758.3px;width:60px;top:395.1px">0</span><span class="num" style="left:853.3px;width:60px;top:395.1px">9</span><span class="num" style="left:943.3px;width:60px;top:395.1px">2</span><span class="num" style="left:1038.3px;width:60px;top:395.1px">1</span><span class="num" style="left:1138.3px;width:60px;top:395.1px">0</span><span class="num" style="left:1229.1px;width:60px;top:395.1px">346</span><span class="num" style="left:1312.0px;top:395.1px;text-align:left;transform-origin:0 50%;transform:scale(1,1.09)">2023-08-16</span></div>
<div><span class="cb" style="left:16px;top:477px"></span><span class="num" style="left:48.4px;width:70px;top:475.1px">472</span><span class="img" style="top:454px"><svg class="ic" style="left:23.7px;top:24.1px;width:11.2px;height:10.8px" viewBox="0 0 13 12" preserveAspectRatio="none"><g fill="none" stroke="#555" stroke-width="1.1"><rect x="0.6" y="0.6" width="11.8" height="10.8" rx="1"/><path d="M0.8 11.2L4.2 5.9L7.6 8.3L12.2 4.4"/></g><circle cx="4.2" cy="3.5" r="1" fill="#555"/></svg></span><span class="t " style="left:199.00px;top:458.80px;font-size:13px;line-height:20px;color:#333;">冰山总裁赖上我</span><span class="tag o" style="left:199.0px;top:479px;width:40.0px"><b>热门</b></span><span class="tag o" style="left:243.0px;top:479px;width:40.0px"><b>推荐</b></span><span class="tag p e" style="left:286.5px;top:485px;width:16px"></span><span class="tag c" style="left:307.0px;top:479px;width:40.0px"><b>内地</b></span><span class="tag o" style="left:351.0px;top:479px;width:43.0px"><b><span class="l" style="transform:scaleY(1.168)">2015</span></b></span><span class="num" style="left:463.4px;width:60px;top:475.1px">180</span><span class="num" style="left:558.3px;width:60px;top:475.1px">0</span><span class="num" style="left:659.1px;width:60px;top:475.1px">110</span><span class="num" style="left:758.3px;width:60px;top:475.1px">0</span><span class="num" style="left:853.3px;width:60px;top:475.1px">6</span><span class="num" style="left:943.3px;width:60px;top:475.1px">0</span><span class="num" style="left:1038.3px;width:60px;top:475.1px">0</span><span class="num" style="left:1138.3px;width:60px;top:475.1px">0</span><span class="num" style="left:1229.1px;width:60px;top:475.1px">345</span><span class="num" style="left:1312.0px;top:475.1px;text-align:left;transform-origin:0 50%;transform:scale(1,1.09)">2023-08-16</span></div>
<div><span class="cb" style="left:16px;top:557px"></span><span class="num" style="left:48.4px;width:70px;top:555.1px">471</span><span class="img" style="top:534px"><svg class="ic" style="left:23.7px;top:24.1px;width:11.2px;height:10.8px" viewBox="0 0 13 12" preserveAspectRatio="none"><g fill="none" stroke="#555" stroke-width="1.1"><rect x="0.6" y="0.6" width="11.8" height="10.8" rx="1"/><path d="M0.8 11.2L4.2 5.9L7.6 8.3L12.2 4.4"/></g><circle cx="4.2" cy="3.5" r="1" fill="#555"/></svg></span><span class="t " style="left:199.00px;top:538.80px;font-size:13px;line-height:20px;color:#333;">冰山女神爱上我</span><span class="tag o" style="left:199.0px;top:559px;width:40.0px"><b>热门</b></span><span class="tag o" style="left:243.0px;top:559px;width:40.0px"><b>推荐</b></span><span class="tag p" style="left:287.0px;top:559px;width:52.0px"><b>古装片</b></span><span class="tag c" style="left:343.0px;top:559px;width:40.0px"><b>内地</b></span><span class="tag o" style="left:387.0px;top:559px;width:43.0px"><b><span class="l" style="transform:scaleY(1.168)">2015</span></b></span><span class="num" style="left:463.4px;width:60px;top:555.1px">180</span><span class="num" style="left:558.3px;width:60px;top:555.1px">0</span><span class="num" style="left:659.1px;width:60px;top:555.1px">99</span><span class="num" style="left:758.3px;width:60px;top:555.1px">0</span><span class="num" style="left:853.3px;width:60px;top:555.1px">3</span><span class="num" style="left:943.3px;width:60px;top:555.1px">0</span><span class="num" style="left:1038.3px;width:60px;top:555.1px">0</span><span class="num" style="left:1138.3px;width:60px;top:555.1px">0</span><span class="num" style="left:1229.1px;width:60px;top:555.1px">344</span><span class="num" style="left:1312.0px;top:555.1px;text-align:left;transform-origin:0 50%;transform:scale(1,1.09)">2023-08-16</span></div>
<div><span class="cb" style="left:16px;top:637px"></span><span class="num" style="left:48.4px;width:70px;top:635.1px">470</span><span class="img" style="top:614px"><svg class="ic" style="left:23.7px;top:24.1px;width:11.2px;height:10.8px" viewBox="0 0 13 12" preserveAspectRatio="none"><g fill="none" stroke="#555" stroke-width="1.1"><rect x="0.6" y="0.6" width="11.8" height="10.8" rx="1"/><path d="M0.8 11.2L4.2 5.9L7.6 8.3L12.2 4.4"/></g><circle cx="4.2" cy="3.5" r="1" fill="#555"/></svg></span><span class="t " style="left:199.00px;top:618.80px;font-size:13px;line-height:20px;color:#333;">北川风云</span><span class="tag o" style="left:199.0px;top:639px;width:40.0px"><b>热门</b></span><span class="tag o" style="left:243.0px;top:639px;width:40.0px"><b>推荐</b></span><span class="tag p" style="left:287.0px;top:639px;width:52.0px"><b>动作片</b></span><span class="tag c" style="left:343.0px;top:639px;width:40.0px"><b>内地</b></span><span class="tag o" style="left:387.0px;top:639px;width:43.0px"><b><span class="l" style="transform:scaleY(1.168)">2015</span></b></span><span class="num" style="left:463.4px;width:60px;top:635.1px">180</span><span class="num" style="left:558.3px;width:60px;top:635.1px">0</span><span class="num" style="left:659.1px;width:60px;top:635.1px">122</span><span class="num" style="left:758.3px;width:60px;top:635.1px">0</span><span class="num" style="left:853.3px;width:60px;top:635.1px">1</span><span class="num" style="left:943.3px;width:60px;top:635.1px">0</span><span class="num" style="left:1038.3px;width:60px;top:635.1px">0</span><span class="num" style="left:1138.3px;width:60px;top:635.1px">0</span><span class="num" style="left:1229.1px;width:60px;top:635.1px">343</span><span class="num" style="left:1312.0px;top:635.1px;text-align:left;transform-origin:0 50%;transform:scale(1,1.09)">2023-08-16</span></div>
<div><span class="cb" style="left:16px;top:717px"></span><span class="num" style="left:48.4px;width:70px;top:715.1px">469</span><span class="img" style="top:694px"><svg class="ic" style="left:23.7px;top:24.1px;width:11.2px;height:10.8px" viewBox="0 0 13 12" preserveAspectRatio="none"><g fill="none" stroke="#555" stroke-width="1.1"><rect x="0.6" y="0.6" width="11.8" height="10.8" rx="1"/><path d="M0.8 11.2L4.2 5.9L7.6 8.3L12.2 4.4"/></g><circle cx="4.2" cy="3.5" r="1" fill="#555"/></svg></span><span class="t " style="left:199.00px;top:698.80px;font-size:13px;line-height:20px;color:#333;">百亿赘婿在身边</span><span class="tag o" style="left:199.0px;top:719px;width:40.0px"><b>热门</b></span><span class="tag o" style="left:243.0px;top:719px;width:40.0px"><b>推荐</b></span><span class="tag p e" style="left:286.5px;top:725px;width:16px"></span><span class="tag c" style="left:307.0px;top:719px;width:40.0px"><b>内地</b></span><span class="tag o" style="left:351.0px;top:719px;width:43.0px"><b><span class="l" style="transform:scaleY(1.168)">2015</span></b></span><span class="num" style="left:463.4px;width:60px;top:715.1px">180</span><span class="num" style="left:558.3px;width:60px;top:715.1px">0</span><span class="num" style="left:659.1px;width:60px;top:715.1px">81</span><span class="num" style="left:758.3px;width:60px;top:715.1px">0</span><span class="num" style="left:853.3px;width:60px;top:715.1px">1</span><span class="num" style="left:943.3px;width:60px;top:715.1px">0</span><span class="num" style="left:1038.3px;width:60px;top:715.1px">0</span><span class="num" style="left:1138.3px;width:60px;top:715.1px">0</span><span class="num" style="left:1229.1px;width:60px;top:715.1px">342</span><span class="num" style="left:1312.0px;top:715.1px;text-align:left;transform-origin:0 50%;transform:scale(1,1.09)">2023-08-16</span></div>
<div class="fix" style="left:1380px"><div class="hd" style="width:170px"></div><div class="row" style="top:44px;width:170px"></div><div class="row alt" style="top:124px;width:170px"></div><div class="row" style="top:204px;width:170px"></div><div class="row alt" style="top:284px;width:170px"></div><div class="row" style="top:364px;width:170px"></div><div class="row alt" style="top:444px;width:170px"></div><div class="row" style="top:524px;width:170px"></div><div class="row alt" style="top:604px;width:170px"></div><div class="row" style="top:684px;width:170px"></div><span class="t " style="left:71.00px;top:12.60px;font-size:13px;line-height:20px;color:#333;">操作</span><a class="t " style="left:12.50px;top:74.60px;font-size:13px;line-height:20px;color:#7536d0;">上架</a><a class="t " style="left:50.50px;top:74.60px;font-size:13px;line-height:20px;color:#333;">编辑</a><a class="t " style="left:90.50px;top:74.60px;font-size:13px;line-height:20px;color:#333;">复制</a><a class="t " style="left:130.50px;top:74.60px;font-size:13px;line-height:20px;color:#333;">删除</a><a class="t " style="left:12.50px;top:154.60px;font-size:13px;line-height:20px;color:#7536d0;">上架</a><a class="t " style="left:50.50px;top:154.60px;font-size:13px;line-height:20px;color:#333;">编辑</a><a class="t " style="left:90.50px;top:154.60px;font-size:13px;line-height:20px;color:#333;">复制</a><a class="t " style="left:130.50px;top:154.60px;font-size:13px;line-height:20px;color:#333;">删除</a><a class="t " style="left:12.50px;top:234.60px;font-size:13px;line-height:20px;color:#7536d0;">上架</a><a class="t " style="left:50.50px;top:234.60px;font-size:13px;line-height:20px;color:#333;">编辑</a><a class="t " style="left:90.50px;top:234.60px;font-size:13px;line-height:20px;color:#333;">复制</a><a class="t " style="left:130.50px;top:234.60px;font-size:13px;line-height:20px;color:#333;">删除</a><a class="t " style="left:12.50px;top:314.60px;font-size:13px;line-height:20px;color:#7536d0;">上架</a><a class="t " style="left:50.50px;top:314.60px;font-size:13px;line-height:20px;color:#333;">编辑</a><a class="t " style="left:90.50px;top:314.60px;font-size:13px;line-height:20px;color:#333;">复制</a><a class="t " style="left:130.50px;top:314.60px;font-size:13px;line-height:20px;color:#333;">删除</a><a class="t " style="left:12.50px;top:394.60px;font-size:13px;line-height:20px;color:#7536d0;">上架</a><a class="t " style="left:50.50px;top:394.60px;font-size:13px;line-height:20px;color:#333;">编辑</a><a class="t " style="left:90.50px;top:394.60px;font-size:13px;line-height:20px;color:#333;">复制</a><a class="t " style="left:130.50px;top:394.60px;font-size:13px;line-height:20px;color:#333;">删除</a><a class="t " style="left:12.50px;top:474.60px;font-size:13px;line-height:20px;color:#7536d0;">上架</a><a class="t " style="left:50.50px;top:474.60px;font-size:13px;line-height:20px;color:#333;">编辑</a><a class="t " style="left:90.50px;top:474.60px;font-size:13px;line-height:20px;color:#333;">复制</a><a class="t " style="left:130.50px;top:474.60px;font-size:13px;line-height:20px;color:#333;">删除</a><a class="t " style="left:12.50px;top:554.60px;font-size:13px;line-height:20px;color:#7536d0;">上架</a><a class="t " style="left:50.50px;top:554.60px;font-size:13px;line-height:20px;color:#333;">编辑</a><a class="t " style="left:90.50px;top:554.60px;font-size:13px;line-height:20px;color:#333;">复制</a><a class="t " style="left:130.50px;top:554.60px;font-size:13px;line-height:20px;color:#333;">删除</a><a class="t " style="left:12.50px;top:634.60px;font-size:13px;line-height:20px;color:#7536d0;">上架</a><a class="t " style="left:50.50px;top:634.60px;font-size:13px;line-height:20px;color:#333;">编辑</a><a class="t " style="left:90.50px;top:634.60px;font-size:13px;line-height:20px;color:#333;">复制</a><a class="t " style="left:130.50px;top:634.60px;font-size:13px;line-height:20px;color:#333;">删除</a><a class="t " style="left:12.50px;top:714.60px;font-size:13px;line-height:20px;color:#7536d0;">上架</a><a class="t " style="left:50.50px;top:714.60px;font-size:13px;line-height:20px;color:#333;">编辑</a><a class="t " style="left:90.50px;top:714.60px;font-size:13px;line-height:20px;color:#333;">复制</a><a class="t " style="left:130.50px;top:714.60px;font-size:13px;line-height:20px;color:#333;">删除</a></div>
</div>
<div class="t" style="left:797px;top:463px;font-size:38px;line-height:50px;font-weight:900;color:rgba(0,0,0,0.09);transform-origin:0 50%;transform:skewX(-9.5deg) scaleX(1.15)">刀客源码网</div>
<footer id="taskbar"><span class="abs" style="left:0;top:0;width:1800px;height:9px;background:linear-gradient(180deg,rgba(70,80,100,.05),rgba(70,80,100,0))"></span><span class="abs" style="left:216px;top:0;width:1584px;height:1px;background:#a9b0b6"></span><span class="abs" style="left:7px;top:10.5px;width:11px;height:11px;border-radius:50%;background:#a9b6ea"></span><span class="abs" style="left:14.5px;top:12.5px;width:9px;height:9px;border-radius:50%;background:#f3ae3d"></span><span class="t " style="left:36.80px;top:8.90px;font-size:12px;line-height:16px;color:#1c1c1c;"><span class="l" style="transform:scaleY(1.081)">25°C</span></span><span class="abs" style="left:625px;top:12px;width:11px;height:10px;background:#3db1ea"></span><span class="abs" style="left:637px;top:12px;width:11px;height:10px;background:#1f8fe0"></span><span class="abs" style="left:664px;top:8px;width:215px;height:30px;border-radius:15px;background:#f1f1f6"></span><span class="abs" style="left:832px;top:12px;width:5px;height:6px;background:#e8854a"></span><span class="abs" style="left:899px;top:13px;width:17.5px;height:10px;background:#f6f6f8"></span><span class="abs" style="left:937px;top:12px;width:23px;height:20px;border-radius:5px;background:#f0246e"></span><span class="abs" style="left:983px;top:12px;width:20px;height:20px;border-radius:50%;background:#2bbbd8"></span><span class="abs" style="left:1032.5px;top:13.8px;width:9px;height:9px;background:#1b6fd0;transform:rotate(45deg)"></span><span class="abs" style="left:1069px;top:13px;width:9px;height:9px;background:#e9a820"></span><span class="abs" style="left:1113px;top:12px;width:23px;height:20px;border-radius:5px;background:#e5112b"></span><span class="abs" style="left:1160px;top:13px;width:10px;height:10px;border-radius:50%;background:#8fe39a"></span><span class="abs" style="left:1203px;top:12px;width:19px;height:19px;border-radius:50%;background:#e9473c"></span><span class="abs" style="left:1238px;top:5px;width:38px;height:30px;border-radius:4px;background:#eeeef4"></span><span class="abs" style="left:1247.5px;top:13.6px;width:10px;height:3px;border-left:2px solid #d83a2b;border-right:2px solid #d83a2b;background:linear-gradient(90deg,transparent 2px,#d83a2b 2px,#d83a2b 4px,transparent 4px)"></span></footer>
</body>
</html>
